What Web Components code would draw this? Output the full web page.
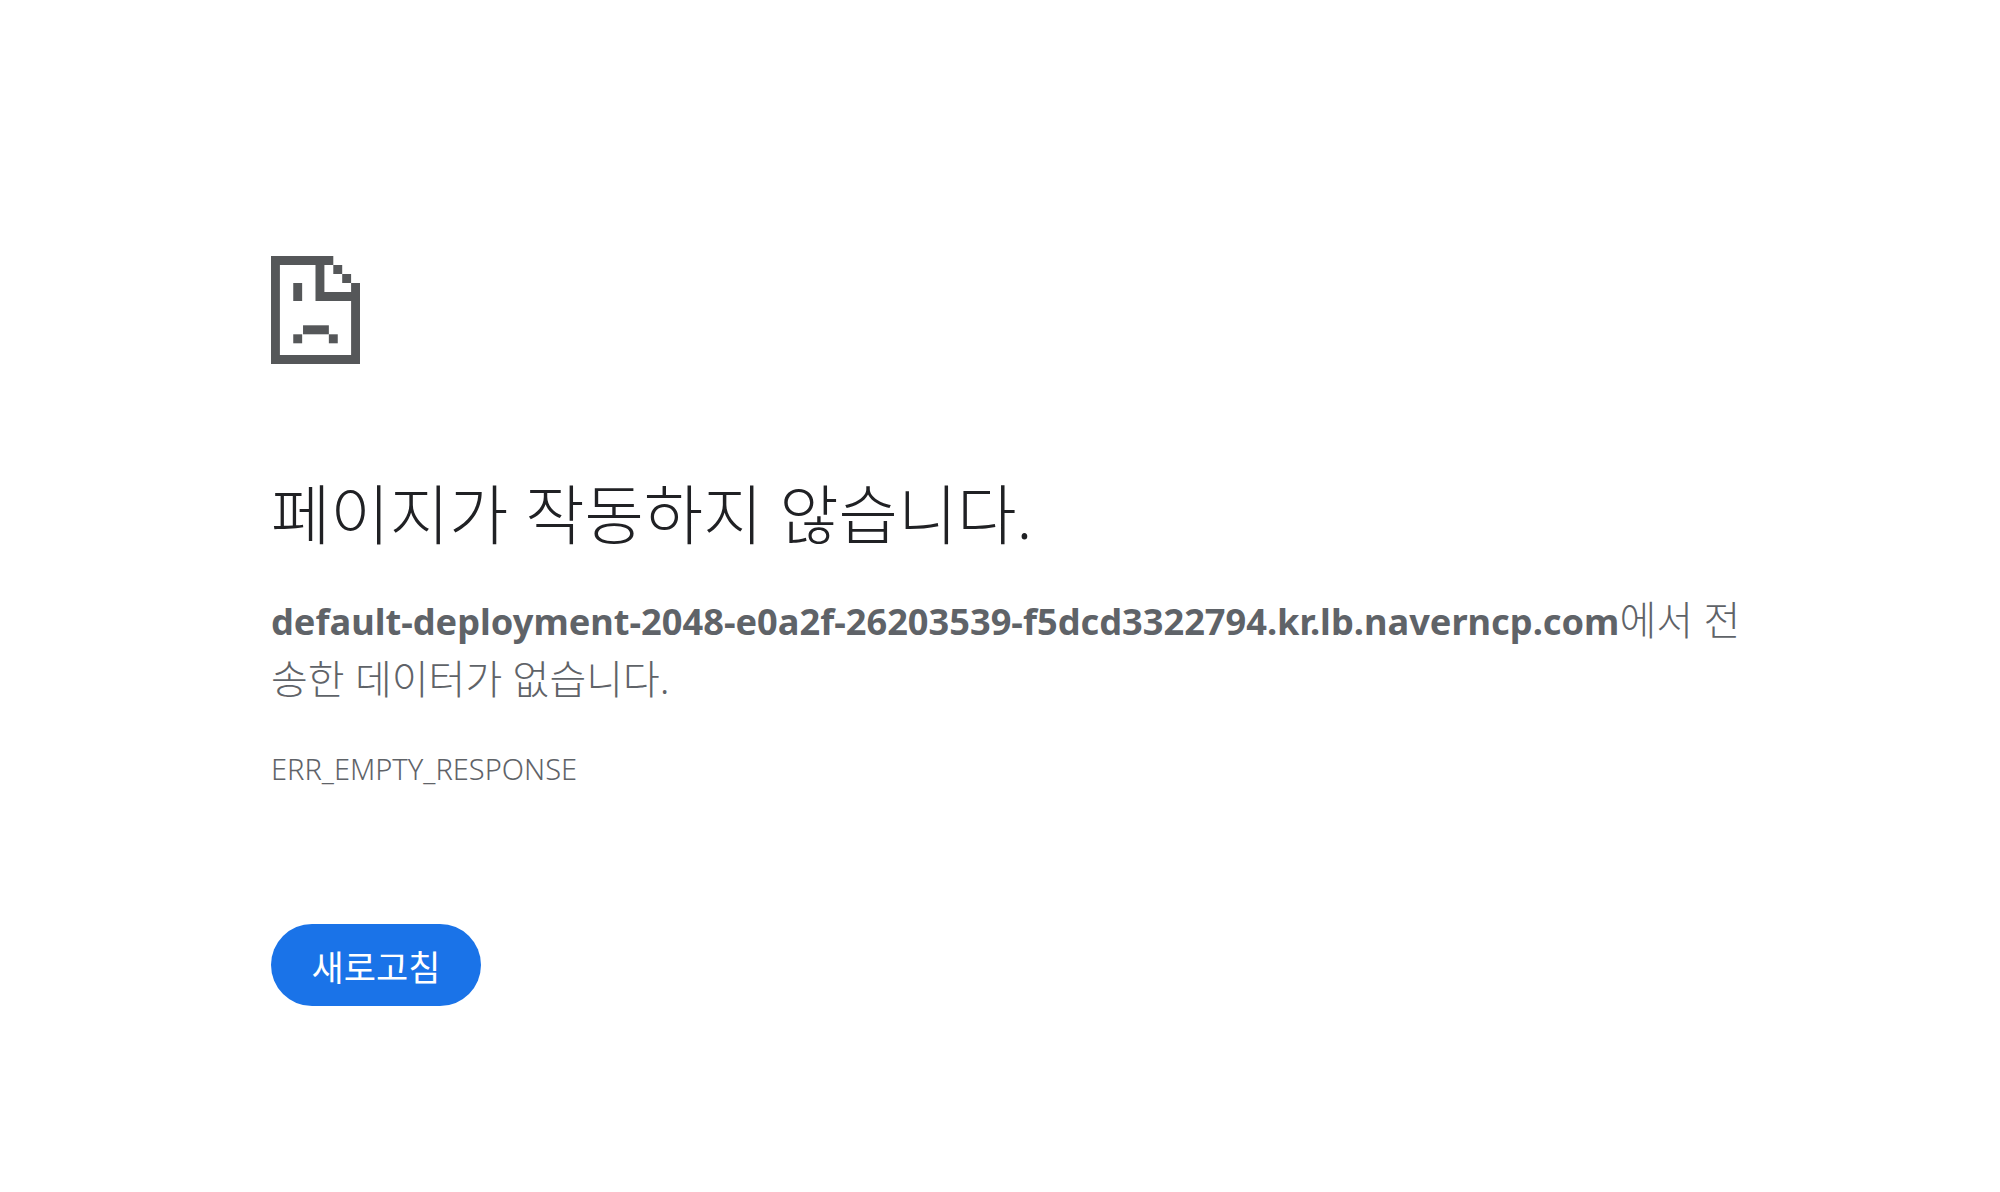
<!DOCTYPE html>
<html lang="ko">
<head>
<meta charset="utf-8">
<title>페이지가 작동하지 않습니다.</title>
<style>
	html, body { margin: 0; height: 100%; background: #fff; }
	strong { font-weight: 700; font-size: 36.2px; }
</style>
</head>
<body>
<error-page>
	<sad-tab-icon slot="icon"></sad-tab-icon>
	<span slot="title">페이지가 작동하지 않습니다.</span>
	<span slot="message"><strong>default-deployment-2048-e0a2f-26203539-f5dcd3322794.kr.lb.naverncp.com</strong>에서 전송한 데이터가 없습니다.</span>
	<span slot="code">ERR_EMPTY_RESPONSE</span>
	<reload-button>새로고침</reload-button>
</error-page>
<script>
(() => {
	const fonts = `"Noto Sans", "Noto Sans CJK KR", sans-serif`;

	customElements.define('sad-tab-icon', class extends HTMLElement {
		constructor() {
			super();
			this.attachShadow({ mode: 'open' });
			this.shadowRoot.innerHTML = `
				<style>
					:host { display: block; width: 89px; height: 108px; }
					svg { display: block; }
				</style>
				<svg width="89" height="108" viewBox="0 0 10 12" preserveAspectRatio="none" fill="#555759">
					<path d="M0 0H7V1H6V4H10V12H0ZM1 1V11H9V5H5V1Z"/>
					<rect x="7" y="1" width="1" height="1"/>
					<rect x="8" y="2" width="1" height="1"/>
					<rect x="9" y="3" width="1" height="1"/>
					<rect x="2.5" y="3" width="1" height="2"/>
					<rect x="3.6" y="7.7" width="2.9" height="1"/>
					<rect x="2.5" y="8.7" width="1" height="1"/>
					<rect x="6.5" y="8.7" width="1" height="1"/>
				</svg>
			`;
		}
	});

	customElements.define('reload-button', class extends HTMLElement {
		constructor() {
			super();
			this.attachShadow({ mode: 'open' });
			this.shadowRoot.innerHTML = `
				<style>
					:host { display: inline-flex; }
					button {
						width: 210px;
						height: 82px;
						padding: 0;
						border: 0;
						border-radius: 41px;
						background: #1a73e8;
						color: #fff;
						font: 400 35px ${fonts};
					}
				</style>
				<button><slot></slot></button>
			`;
		}
	});

	customElements.define('error-page', class extends HTMLElement {
		constructor() {
			super();
			this.attachShadow({ mode: 'open' });
			this.shadowRoot.innerHTML = `
				<style>
					:host {
						display: flex;
						flex-direction: column;
						align-items: flex-start;
						box-sizing: border-box;
						height: 100%;
						padding: 256px 250px 0 271px;
						font-family: ${fonts};
						color: #5f6368;
					}
					.title {
						margin-top: 114px;
						color: #202124;
						font-size: 64.5px;
						font-weight: 300;
						line-height: 72px;
					}
					.message {
						margin-top: 41px;
						font-size: 40px;
						font-weight: 300;
						line-height: 57px;
					}
					.code {
						margin-top: 43px;
						font-size: 29px;
						font-weight: 300;
						line-height: 38px;
					}
					.action { margin-top: 136px; }
				</style>
				<slot name="icon"></slot>
				<div class="title"><slot name="title"></slot></div>
				<div class="message"><slot name="message"></slot></div>
				<div class="code"><slot name="code"></slot></div>
				<div class="action"><slot></slot></div>
			`;
		}
	});
})();
</script>
</body>
</html>
